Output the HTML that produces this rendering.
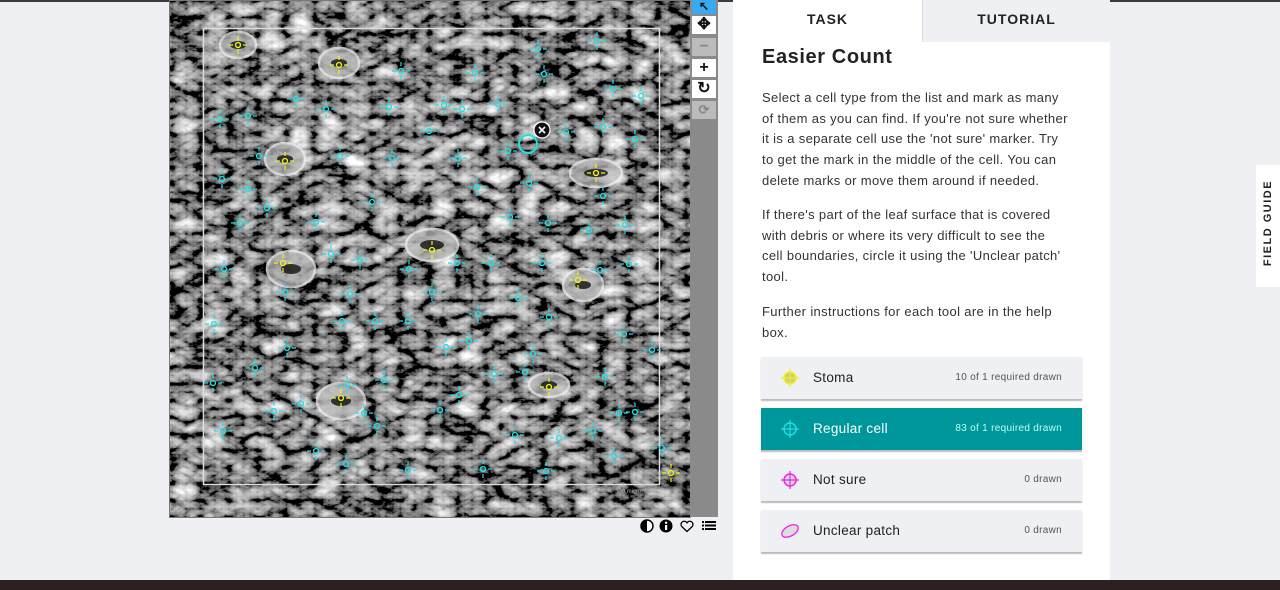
<!DOCTYPE html>
<html><head><meta charset="utf-8"><style>
*{margin:0;padding:0;box-sizing:border-box}
body{width:1280px;height:590px;overflow:hidden;background:#eef0f3;font-family:"Liberation Sans",sans-serif;position:relative;color:#222}
.topbar{position:absolute;left:0;top:0;width:1280px;height:2px;background:#3a3a3a}
.bot{position:absolute;left:0;top:580px;width:1280px;height:10px;background:#2b2121}
.img{position:absolute;left:169px;top:0;width:522px;height:518px;border:1px solid #777;overflow:hidden}
.tools{position:absolute;left:690px;top:0;width:28px;height:517px;background:#8a8a8a}
.tb{position:absolute;left:2px;width:24px;height:18px;background:#fff;font-size:16px;font-weight:bold;text-align:center;line-height:18px;color:#111}
.panel{position:absolute;left:733px;top:0;width:377px;height:580px;background:#fff}
.tab{position:absolute;top:0;height:42px;font-size:14px;font-weight:bold;letter-spacing:1px;text-align:center;line-height:38px}
h1{position:absolute;left:29px;top:46px;font-size:20px;font-weight:bold;letter-spacing:.6px}
.p{position:absolute;left:29px;white-space:nowrap;font-size:13px;line-height:20.7px;color:#333;letter-spacing:.35px}
.btn{position:absolute;left:28px;width:321px;height:42px;background:#eef0f3;box-shadow:0 2px 1px #bbb;font-size:13.5px;letter-spacing:.3px}
.btn .l{position:absolute;left:52px;top:13px}
.btn .r{position:absolute;right:20px;top:15px;font-size:10px;color:#555}
.btn svg{position:absolute;left:19px;top:11px}
.fg{position:absolute;left:1256px;top:165px;width:24px;height:122px;background:#fff}
.fg span{position:absolute;left:-38px;top:52px;width:100px;transform:rotate(-90deg);font-size:11px;font-weight:bold;letter-spacing:1.5px;text-align:center}
</style></head><body>
<div class="topbar"></div>
<div class="img">
<svg width="522" height="518" viewBox="169 0 522 518">
<defs>
<filter id="t" x="0" y="0" width="100%" height="100%">
<feTurbulence type="turbulence" baseFrequency="0.035 0.06" numOctaves="4" seed="7"/>
<feColorMatrix type="matrix" values="0.33 0.33 0.33 0 0 0.33 0.33 0.33 0 0 0.33 0.33 0.33 0 0 0 0 0 0 1"/>
<feComponentTransfer><feFuncR type="linear" slope="2.3" intercept="-0.46"/><feFuncG type="linear" slope="2.3" intercept="-0.46"/><feFuncB type="linear" slope="2.3" intercept="-0.46"/></feComponentTransfer>
</filter>
<g id="c"><circle r="2.5" fill="none" stroke="#1fe0e8" stroke-width="1.3"/><path d="M-9 0h4M5 0h4M0-9v4M0 5v4" stroke="#1fe0e8" stroke-width="1.2"/></g>
<g id="y"><circle r="2.5" fill="none" stroke="#f2f21a" stroke-width="1.3"/><path d="M-9 0h4M5 0h4M0-9v4M0 5v4" stroke="#f2f21a" stroke-width="1.2"/></g>
</defs>
<rect x="169" y="0" width="522" height="518" fill="#222"/>
<rect x="169" y="0" width="522" height="518" filter="url(#t)"/>
<g fill="#bbb" stroke="#eee" stroke-width="2.5" opacity=".75">
<ellipse cx="237" cy="44" rx="18" ry="13"/><ellipse cx="338" cy="62" rx="20" ry="15"/><ellipse cx="284" cy="158" rx="20" ry="16"/><ellipse cx="595" cy="172" rx="26" ry="14"/><ellipse cx="431" cy="244" rx="26" ry="16"/><ellipse cx="290" cy="268" rx="24" ry="18"/><ellipse cx="582" cy="284" rx="20" ry="16"/><ellipse cx="340" cy="400" rx="24" ry="18"/><ellipse cx="548" cy="384" rx="20" ry="12"/>
</g>
<g fill="#111" opacity=".8"><ellipse cx="237" cy="44" rx="8" ry="4"/><ellipse cx="338" cy="62" rx="8" ry="4"/><ellipse cx="284" cy="158" rx="8" ry="4"/><ellipse cx="595" cy="172" rx="12" ry="4"/><ellipse cx="431" cy="244" rx="12" ry="5"/><ellipse cx="290" cy="268" rx="10" ry="5"/><ellipse cx="582" cy="284" rx="8" ry="4"/><ellipse cx="340" cy="400" rx="10" ry="5"/><ellipse cx="548" cy="384" rx="8" ry="4"/></g>
<rect x="202.5" y="27.5" width="456" height="456" fill="none" stroke="#ddd" stroke-width="1.5"/>
<use href="#y" x="237" y="44"/><use href="#y" x="338" y="64"/><use href="#y" x="284" y="160"/><use href="#y" x="595" y="172"/><use href="#y" x="431" y="249"/><use href="#y" x="282" y="262"/><use href="#y" x="577" y="279"/><use href="#y" x="340" y="397"/><use href="#y" x="548" y="386"/><use href="#y" x="670" y="472"/>
<g>
<use href="#c" x="537" y="48"/><use href="#c" x="596" y="40"/><use href="#c" x="400" y="70"/><use href="#c" x="474" y="72"/><use href="#c" x="543" y="73"/><use href="#c" x="612" y="88"/><use href="#c" x="640" y="95"/><use href="#c" x="295" y="98"/><use href="#c" x="325" y="108"/><use href="#c" x="388" y="106"/><use href="#c" x="443" y="104"/><use href="#c" x="461" y="108"/><use href="#c" x="497" y="103"/><use href="#c" x="219" y="118"/><use href="#c" x="247" y="115"/><use href="#c" x="428" y="130"/><use href="#c" x="565" y="131"/><use href="#c" x="602" y="126"/><use href="#c" x="634" y="138"/><use href="#c" x="258" y="155"/><use href="#c" x="339" y="155"/><use href="#c" x="391" y="157"/><use href="#c" x="457" y="157"/><use href="#c" x="507" y="150"/><use href="#c" x="221" y="178"/><use href="#c" x="247" y="188"/><use href="#c" x="371" y="201"/><use href="#c" x="476" y="186"/><use href="#c" x="528" y="182"/><use href="#c" x="602" y="195"/><use href="#c" x="266" y="207"/><use href="#c" x="239" y="222"/><use href="#c" x="315" y="221"/><use href="#c" x="509" y="216"/><use href="#c" x="547" y="222"/><use href="#c" x="588" y="229"/><use href="#c" x="624" y="224"/><use href="#c" x="223" y="268"/><use href="#c" x="330" y="253"/><use href="#c" x="359" y="259"/><use href="#c" x="408" y="268"/><use href="#c" x="456" y="262"/><use href="#c" x="490" y="262"/><use href="#c" x="541" y="262"/><use href="#c" x="599" y="269"/><use href="#c" x="628" y="263"/><use href="#c" x="284" y="291"/><use href="#c" x="349" y="293"/><use href="#c" x="431" y="291"/><use href="#c" x="517" y="297"/><use href="#c" x="213" y="323"/><use href="#c" x="341" y="320"/><use href="#c" x="374" y="320"/><use href="#c" x="407" y="320"/><use href="#c" x="477" y="313"/><use href="#c" x="548" y="316"/><use href="#c" x="623" y="333"/><use href="#c" x="286" y="347"/><use href="#c" x="445" y="346"/><use href="#c" x="468" y="340"/><use href="#c" x="532" y="353"/><use href="#c" x="651" y="349"/><use href="#c" x="212" y="382"/><use href="#c" x="254" y="367"/><use href="#c" x="346" y="384"/><use href="#c" x="383" y="379"/><use href="#c" x="493" y="373"/><use href="#c" x="524" y="371"/><use href="#c" x="604" y="376"/><use href="#c" x="300" y="403"/><use href="#c" x="458" y="394"/><use href="#c" x="273" y="410"/><use href="#c" x="363" y="412"/><use href="#c" x="439" y="409"/><use href="#c" x="634" y="411"/><use href="#c" x="618" y="412"/><use href="#c" x="222" y="430"/><use href="#c" x="315" y="450"/><use href="#c" x="376" y="425"/><use href="#c" x="514" y="434"/><use href="#c" x="592" y="430"/><use href="#c" x="558" y="437"/><use href="#c" x="613" y="455"/><use href="#c" x="345" y="463"/><use href="#c" x="407" y="469"/><use href="#c" x="482" y="468"/><use href="#c" x="545" y="470"/><use href="#c" x="661" y="447"/>
</g>
<circle cx="527" cy="143" r="9" fill="none" stroke="#1fe0e8" stroke-width="2"/>
<circle cx="541" cy="129" r="8" fill="#111" stroke="#fff" stroke-width="1.2"/>
<path d="M538 126l6 6M544 126l-6 6" stroke="#fff" stroke-width="1.6"/>
<text x="614" y="492" font-size="6" fill="#aaa" font-family="Liberation Sans">300 microns</text>
</svg>
</div>
<div class="tools">
<div class="tb" style="top:0;height:14px;background:#3aa9f0;font-size:12px;line-height:12px">&#x2196;</div>
<div class="tb" style="top:16px">&#x2725;</div>
<div class="tb" style="top:38px;background:#bbb;color:#888">&minus;</div>
<div class="tb" style="top:59px">+</div>
<div class="tb" style="top:80px">&#x21bb;</div>
<div class="tb" style="top:101px;background:#bbb;color:#888;font-size:13px">&#x27f3;</div>
</div>
<svg style="position:absolute;left:640px;top:519px" width="80" height="14">
<circle cx="7" cy="7" r="6" fill="#fff" stroke="#000" stroke-width="1.5"/><path d="M7 1a6 6 0 0 0 0 12z" fill="#000"/>
<circle cx="26" cy="7" r="6.5" fill="#000"/><rect x="25" y="6" width="2.2" height="5" fill="#fff"/><circle cx="26.1" cy="3.8" r="1.2" fill="#fff"/>
<path d="M47 12.5L41.5 7.2a3 3 0 0 1 5.5-3.4a3 3 0 0 1 5.5 3.4z" fill="none" stroke="#000" stroke-width="1.3"/>
<path d="M62 2h2v2h-2zM65 2h11v2h-11zM62 5.5h2v2h-2zM65 5.5h11v2h-11zM62 9h2v2h-2zM65 9h11v2h-11z" fill="#000"/>
</svg>
<div class="panel">
<div class="tab" style="left:0;width:189px;background:#fff">TASK</div>
<div class="tab" style="left:189px;width:188px;background:#eef0f3;border-left:1px solid #ddd">TUTORIAL</div>
<h1>Easier Count</h1>
<div class="p" style="top:88px">Select a cell type from the list and mark as many<br>of them as you can find. If you're not sure whether<br>it is a separate cell use the 'not sure' marker. Try<br>to get the mark in the middle of the cell. You can<br>delete marks or move them around if needed.</div>
<div class="p" style="top:205px">If there's part of the leaf surface that is covered<br>with debris or where its very difficult to see the<br>cell boundaries, circle it using the 'Unclear patch'<br>tool.</div>
<div class="p" style="top:302px">Further instructions for each tool are in the help<br>box.</div>
<div class="btn" style="top:357px"><svg width="20" height="20"><circle cx="10" cy="10" r="6" fill="#cfcf80" stroke="#f0f020" stroke-width="1.5"/><path d="M10 1v18M1 10h18" stroke="#f0f020" stroke-width="1.2"/></svg><span class="l">Stoma</span><span class="r">10 of 1 required drawn</span></div>
<div class="btn" style="top:408px;background:#00979c;color:#fff"><svg width="20" height="20"><circle cx="10" cy="10" r="6" fill="none" stroke="#1fe0e8" stroke-width="1.5"/><path d="M10 1v18M1 10h18" stroke="#1fe0e8" stroke-width="1.2"/></svg><span class="l">Regular cell</span><span class="r" style="color:#bfe">83 of 1 required drawn</span></div>
<div class="btn" style="top:459px"><svg width="20" height="20"><circle cx="10" cy="10" r="6" fill="#ddd" stroke="#f020f0" stroke-width="1.5"/><path d="M10 1v18M1 10h18" stroke="#f020f0" stroke-width="1.2"/></svg><span class="l">Not sure</span><span class="r">0 drawn</span></div>
<div class="btn" style="top:510px"><svg width="20" height="20"><ellipse cx="10" cy="10" rx="9" ry="5" transform="rotate(-30 10 10)" fill="#ddd" stroke="#f020f0" stroke-width="1.3"/></svg><span class="l">Unclear patch</span><span class="r">0 drawn</span></div>
</div>
<div class="fg"><span>FIELD GUIDE</span></div>
<div class="bot"></div>
</body></html>
